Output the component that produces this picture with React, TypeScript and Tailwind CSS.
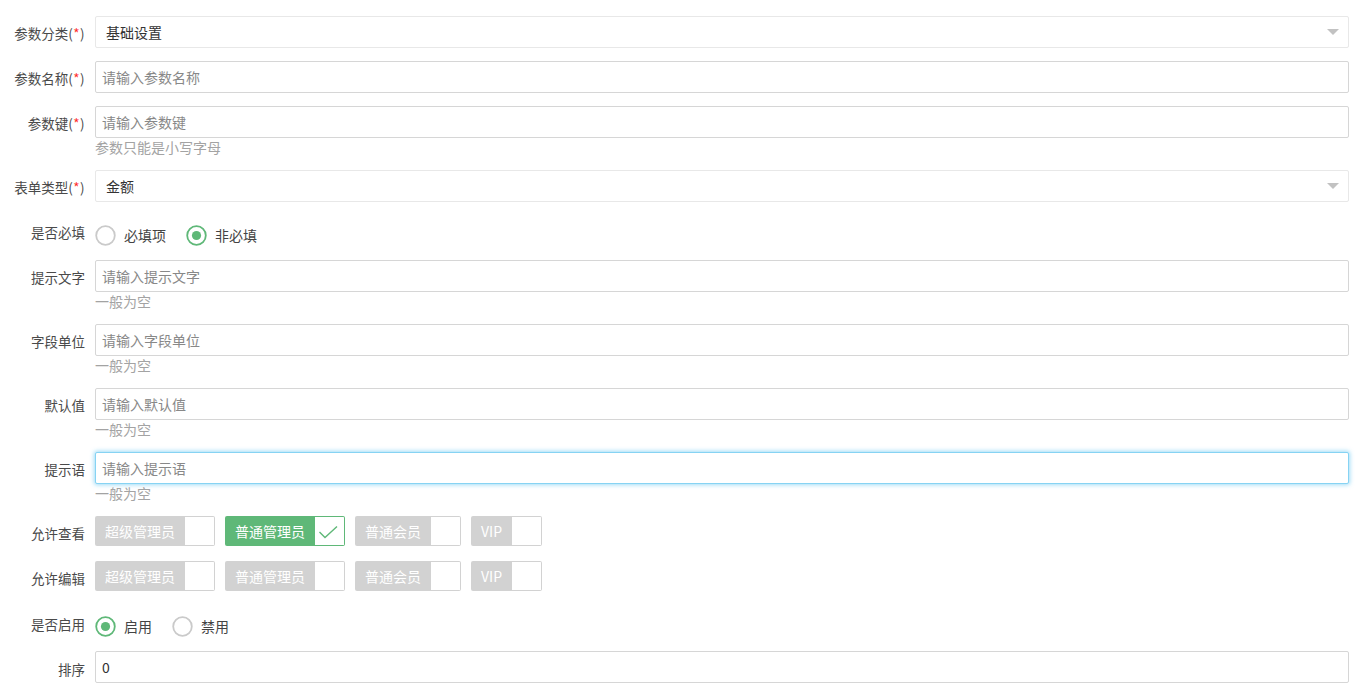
import React from "react";

const FONT = "font-['Noto_Sans_CJK_SC','Noto_Sans',sans-serif]";

function Req() {
  return (
    <span className="tracking-[0.4px]">
      (<span className="text-[#ff2a2a]">*</span>)
    </span>
  );
}

function Label({ children, pt = "pt-[7px]" }: { children: React.ReactNode; pt?: string }) {
  return (
    <div className={`w-[95px] shrink-0 pr-[10px] text-right text-[13.5px] leading-[20px] text-[#4a4a4a] ${pt}`}>
      {children}
    </div>
  );
}

function TextInput({ placeholder, value, focused }: { placeholder?: string; value?: string; focused?: boolean }) {
  return (
    <input
      readOnly
      placeholder={placeholder}
      defaultValue={value}
      className={`block h-[32px] w-full rounded-[2px] border bg-white pl-[6px] text-[14px] text-[#333] outline-none placeholder:text-[#888] ${
        focused
          ? "border-[#86d3f3] shadow-[0_0_4px_1px_rgba(80,190,240,0.55)]"
          : "border-[#d6d6d6]"
      }`}
    />
  );
}

function Select({ value }: { value: string }) {
  return (
    <div className="flex h-[32px] w-full items-center justify-between rounded-[2px] border border-[#e8e8e8] bg-white pl-[10px] pr-[9px] text-[14px] text-[#333]">
      <span>{value}</span>
      <span className="mt-[-1px] h-0 w-0 border-x-[6px] border-t-[6px] border-x-transparent border-t-[#c2c2c2]" />
    </div>
  );
}

function Hint({ children }: { children: React.ReactNode }) {
  return <div className="text-[14px] leading-[19px] text-[#a3a3a3]">{children}</div>;
}

function Radio({ label, checked }: { label: string; checked?: boolean }) {
  return (
    <div className="mr-[20px] mt-[6px] flex h-[28px] items-center">
      <svg width="21" height="21" viewBox="0 0 21 21" className="shrink-0">
        <circle
          cx="10.5"
          cy="10.5"
          r="9.3"
          fill="none"
          stroke={checked ? "#5FB878" : "#cacaca"}
          strokeWidth="1.8"
        />
        {checked && <circle cx="10.5" cy="10.5" r="4.6" fill="#5FB878" />}
      </svg>
      <span className="ml-[8px] text-[14px] text-[#444]">{label}</span>
    </div>
  );
}

function Checkbox({ label, checked }: { label: string; checked?: boolean }) {
  return (
    <div className="mr-[10px] flex h-[30px]">
      <span
        className={`rounded-l-[2px] px-[10px] text-[14px] leading-[30px] text-white ${
          checked ? "bg-[#5FB878]" : "bg-[#d2d2d2]"
        }`}
      >
        {label}
      </span>
      <span
        className={`flex w-[30px] items-start rounded-r-[2px] border border-l-0 bg-white ${
          checked ? "border-[#5FB878]" : "border-[#d2d2d2]"
        }`}
      >
        {checked && (
          <svg width="29" height="28" viewBox="0 0 29 28">
            <polyline
              points="4.5,15 10,20.5 22,9.5"
              fill="none"
              stroke="#5FB878"
              strokeWidth="1.4"
            />
          </svg>
        )}
      </span>
    </div>
  );
}

const roles = ["超级管理员", "普通管理员", "普通会员", "VIP"];

export default function App() {
  return (
    <div className={`${FONT} min-h-[691px] bg-white pr-[22px] pt-[16px]`}>
      <div className="mb-[13px] flex">
        <Label>
          参数分类<Req />
        </Label>
        <div className="flex-1">
          <Select value="基础设置" />
        </div>
      </div>

      <div className="mb-[13px] flex">
        <Label>
          参数名称<Req />
        </Label>
        <div className="flex-1">
          <TextInput placeholder="请输入参数名称" />
        </div>
      </div>

      <div className="mb-[13px] flex">
        <Label>
          参数键<Req />
        </Label>
        <div className="flex-1">
          <TextInput placeholder="请输入参数键" />
          <Hint>参数只能是小写字母</Hint>
        </div>
      </div>

      <div className="mb-[13px] flex">
        <Label>
          表单类型<Req />
        </Label>
        <div className="flex-1">
          <Select value="金额" />
        </div>
      </div>

      <div className="mb-[13px] flex h-[32px]">
        <Label pt="pt-[7px]">是否必填</Label>
        <div className="flex flex-1 items-start">
          <Radio label="必填项" />
          <Radio label="非必填" checked />
        </div>
      </div>

      <div className="mb-[13px] flex">
        <Label>提示文字</Label>
        <div className="flex-1">
          <TextInput placeholder="请输入提示文字" />
          <Hint>一般为空</Hint>
        </div>
      </div>

      <div className="mb-[13px] flex">
        <Label>字段单位</Label>
        <div className="flex-1">
          <TextInput placeholder="请输入字段单位" />
          <Hint>一般为空</Hint>
        </div>
      </div>

      <div className="mb-[13px] flex">
        <Label>默认值</Label>
        <div className="flex-1">
          <TextInput placeholder="请输入默认值" />
          <Hint>一般为空</Hint>
        </div>
      </div>

      <div className="mb-[13px] flex">
        <Label>提示语</Label>
        <div className="flex-1">
          <TextInput placeholder="请输入提示语" focused />
          <Hint>一般为空</Hint>
        </div>
      </div>

      <div className="mb-[15px] flex h-[30px]">
        <Label pt="pt-[7px]">允许查看</Label>
        <div className="flex flex-1">
          {roles.map((r) => (
            <Checkbox key={r} label={r} checked={r === "普通管理员"} />
          ))}
        </div>
      </div>

      <div className="mb-[15px] flex h-[30px]">
        <Label pt="pt-[7px]">允许编辑</Label>
        <div className="flex flex-1">
          {roles.map((r) => (
            <Checkbox key={r} label={r} />
          ))}
        </div>
      </div>

      <div className="mb-[13px] flex h-[32px]">
        <Label pt="pt-[8px]">是否启用</Label>
        <div className="flex flex-1 items-start">
          <Radio label="启用" checked />
          <Radio label="禁用" />
        </div>
      </div>

      <div className="flex">
        <Label pt="pt-[8px]">排序</Label>
        <div className="flex-1">
          <TextInput value="0" />
        </div>
      </div>
    </div>
  );
}
